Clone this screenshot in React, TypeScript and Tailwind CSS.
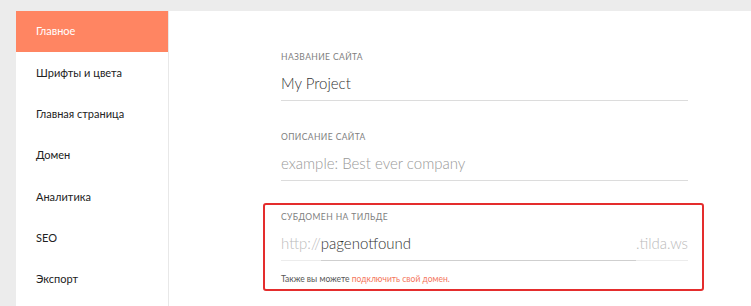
const menu = ['Главное', 'Шрифты и цвета', 'Главная страница', 'Домен', 'Аналитика', 'SEO', 'Экспорт']

const font = { fontFamily: 'Lato, "Noto Sans", sans-serif' }

function Label({ children }: { children: string }) {
  return <div className="h-[12px] text-[8.5px] leading-[12px] tracking-[0.4px] text-[#808080] uppercase">{children}</div>
}

export default function App() {
  return (
    <div className="flex h-[306px] w-full overflow-hidden bg-[#ececec] pt-[11px] pl-[16px]" style={font}>
      <div className="w-[153px] shrink-0 border-r border-[#e8e8e8] bg-white">
        {menu.map((item, i) => (
          <div
            key={item}
            className={`flex h-[41.3px] items-center pl-[20px] text-[11px] ${i === 0 ? 'bg-[#ff8562] text-white' : 'text-[#222]'}`}
          >
            {item}
          </div>
        ))}
      </div>
      <div className="flex-1 bg-white pl-[112px] pt-[40px]">
        <div className="w-[407px]">
          <Label>Название сайта</Label>
          <div className="mt-[5px] flex h-[33px] items-center border-b border-[#dcdcdc] pb-[1px] text-[15px] font-light text-[#333]">
            My Project
          </div>
          <div className="mt-[30px]">
            <Label>Описание сайта</Label>
          </div>
          <div className="mt-[5px] flex h-[33px] items-center border-b border-[#dcdcdc] pb-[1px] text-[15px] font-light text-[#999]">
            example: Best ever company
          </div>
          <div className="mt-[22px] ml-[-18px] mr-[-16px] rounded-[3px] border-2 border-[#e42d2d] pt-[6px] pr-[14px] pb-[3px] pl-[16px]">
            <Label>Субдомен на тильде</Label>
            <div className="mt-[5px] flex h-[33px] items-stretch text-[15px] font-light">
              <div className="flex items-center border-b border-[#ececec] pb-[2px] text-[#bbb]">http://</div>
              <div className="flex flex-1 items-center border-b border-[#cfcfcf] pb-[2px] text-[#333]">pagenotfound</div>
              <div className="flex items-center border-b border-[#ececec] pb-[2px] text-[#bbb]">.tilda.ws</div>
            </div>
            <div className="mt-[11px] h-[14px] text-[8.5px] leading-[14px] text-[#555]">
              Также вы можете <span className="text-[#f4765c]">подключить свой домен.</span>
            </div>
          </div>
        </div>
      </div>
    </div>
  )
}
